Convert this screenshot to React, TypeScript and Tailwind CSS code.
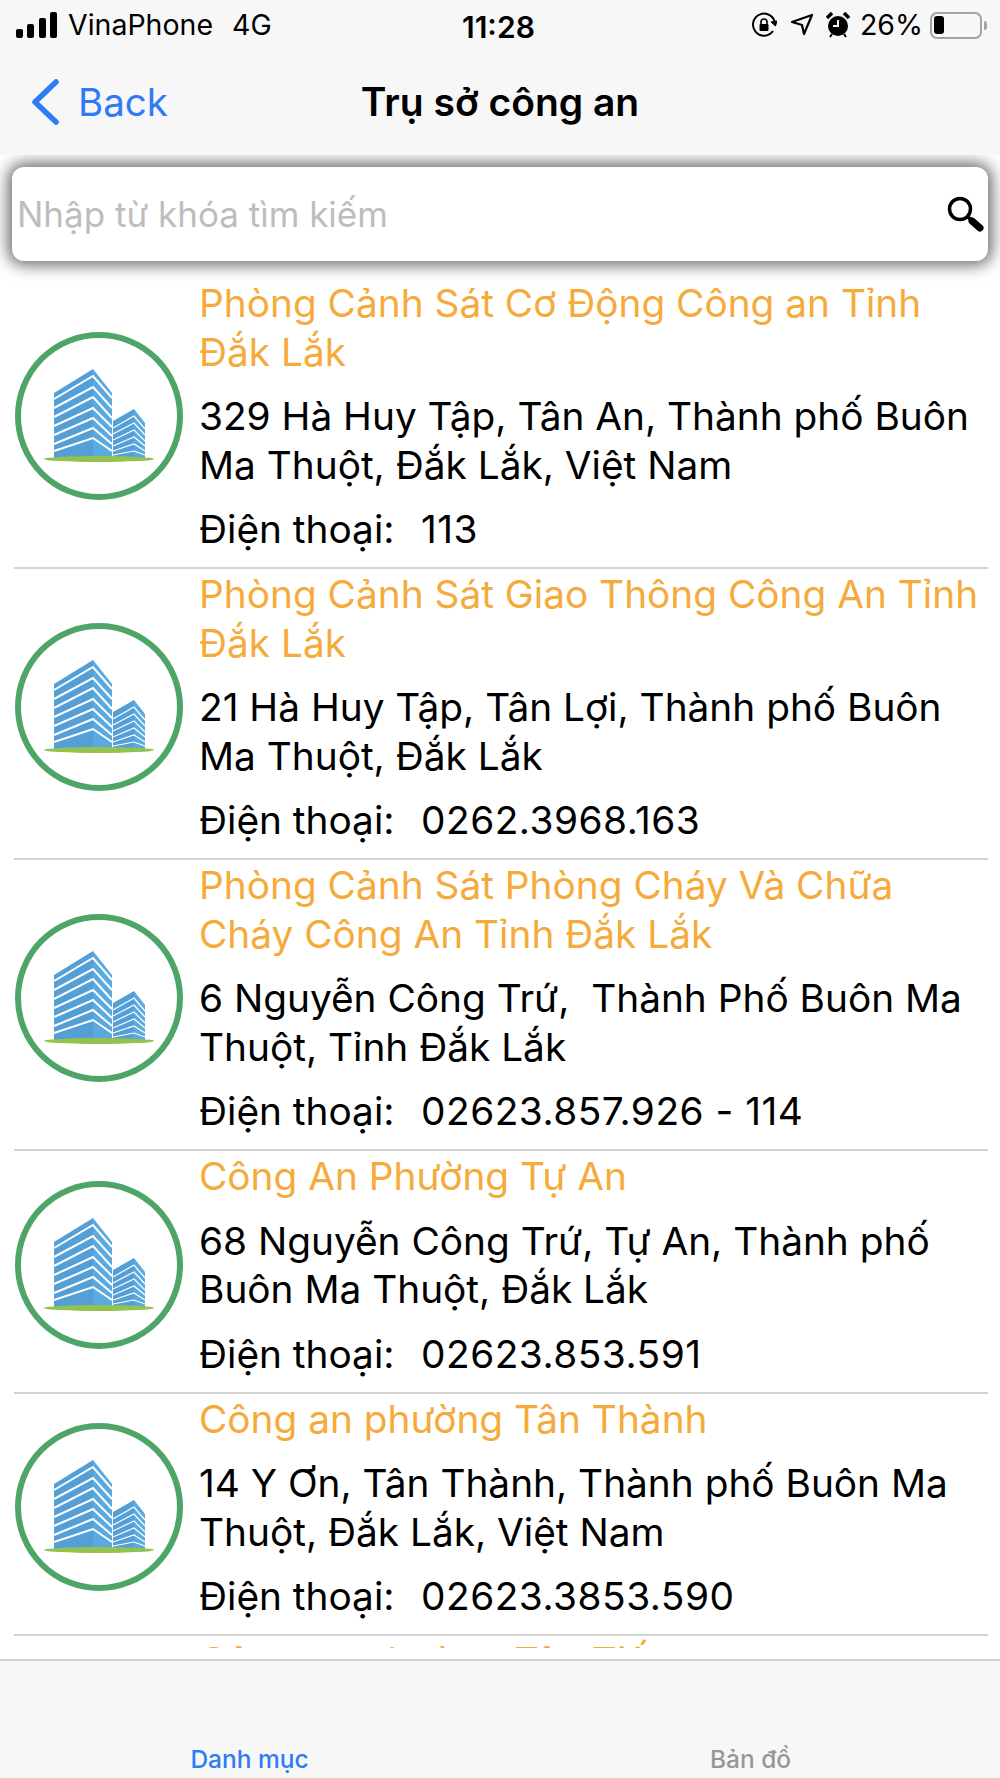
const FONT = "font-['Inter','Liberation_Sans',sans-serif]";

const places = [
  {
    name: ['Phòng Cảnh Sát Cơ Động Công an Tỉnh', 'Đắk Lắk'],
    address: ['329 Hà Huy Tập, Tân An, Thành phố Buôn', 'Ma Thuột, Đắk Lắk, Việt Nam'],
    phone: '113',
  },
  {
    name: ['Phòng Cảnh Sát Giao Thông Công An Tỉnh', 'Đắk Lắk'],
    address: ['21 Hà Huy Tập, Tân Lợi, Thành phố Buôn', 'Ma Thuột, Đắk Lắk'],
    phone: '0262.3968.163',
  },
  {
    name: ['Phòng Cảnh Sát Phòng Cháy Và Chữa', 'Cháy Công An Tỉnh Đắk Lắk'],
    address: ['6 Nguyễn Công Trứ,  Thành Phố Buôn Ma', 'Thuột, Tỉnh Đắk Lắk'],
    phone: '02623.857.926 - 114',
  },
  {
    name: ['Công An Phường Tự An'],
    address: ['68 Nguyễn Công Trứ, Tự An, Thành phố', 'Buôn Ma Thuột, Đắk Lắk'],
    phone: '02623.853.591',
  },
  {
    name: ['Công an phường Tân Thành'],
    address: ['14 Y Ơn, Tân Thành, Thành phố Buôn Ma', 'Thuột, Đắk Lắk, Việt Nam'],
    phone: '02623.3853.590',
  },
];

function BuildingLogo() {
  return (
    <svg width="170" height="170" viewBox="0 0 170 170" className="shrink-0">
      <circle cx="85" cy="85" r="81" fill="#fff" stroke="#4fa567" strokeWidth="6" />
      <path d="M40 62 L79 38 L79 127 L40 127 Z" fill="#549fd6" />
      <path d="M79 38 L98 62 L98 127 L79 127 Z" fill="#5aa9e0" />
      <path d="M99 90 L120 78 L120 127 L99 127 Z" fill="#549fd6" />
      <path d="M120 78 L131 92 L131 127 L120 127 Z" fill="#5aa9e0" />
      <g stroke="#fff" strokeWidth="2" fill="none">
        <path d="M40 68 L79 45 L98 67" />
        <path d="M40 77 L79 56 L98 77" />
        <path d="M40 86 L79 66 L98 87" />
        <path d="M40 95 L79 77 L98 96" />
        <path d="M40 104 L79 87 L98 105" />
        <path d="M40 113 L79 97 L98 113" />
        <path d="M40 120 L79 107 L98 120" />
      </g>
      <g stroke="#fff" strokeWidth="1.2" fill="none">
        <path d="M99 97 L120 85 L131 98" />
        <path d="M99 103 L120 92 L131 104" />
        <path d="M99 109 L120 99 L131 110" />
        <path d="M99 115 L120 106 L131 115" />
        <path d="M99 120 L120 113 L131 120" />
        <path d="M99 124 L120 120 L131 124" />
      </g>
      <ellipse cx="85" cy="128" rx="55" ry="3" fill="#93c24f" />
    </svg>
  );
}

function StatusBar() {
  return (
    <div className="relative flex h-[50px] items-center justify-between pl-4 pr-[13px] text-[28.5px] text-black">
      <div className="flex items-center">
        <svg width="42" height="26" viewBox="0 0 42 26" fill="#000">
          <rect x="0" y="17" width="7" height="9" rx="2" />
          <rect x="11" y="12" width="7" height="14" rx="2" />
          <rect x="23" y="6" width="7" height="20" rx="2" />
          <rect x="34" y="0" width="7" height="26" rx="2" />
        </svg>
        <span className="ml-[10px]">VinaPhone</span>
        <span className="ml-[19px]">4G</span>
      </div>
      <span className="absolute left-[462px] top-[5px] text-[30px] font-semibold">11:28</span>
      <div className="flex items-center">
        <svg width="26" height="26" viewBox="0 0 26 26" fill="none" stroke="#000" strokeWidth="2">
          <path d="M22 19 A11 11 0 1 1 24 12" />
          <path d="M20 10 L24.5 14 L26 9 Z" fill="#000" strokeWidth="1" />
          <rect x="8.5" y="12" width="9" height="7" rx="1" fill="#000" stroke="none" />
          <path d="M10 12 V10 A3 3 0 0 1 16 10 V12" strokeWidth="1.6" />
        </svg>
        <svg width="24" height="24" viewBox="0 0 24 24" fill="none" stroke="#000" strokeWidth="2.2" strokeLinejoin="round" className="ml-[13px]">
          <path d="M22 2 L14 21 L12 12 L2 9 Z" />
        </svg>
        <svg width="24" height="26" viewBox="0 0 24 26" className="ml-[12px]">
          <circle cx="12" cy="14" r="10" fill="#000" />
          <path d="M12 8 V14 H7" stroke="#f7f7f7" strokeWidth="2" fill="none" />
          <path d="M1 6 L6 1 M18 1 L23 6" stroke="#000" strokeWidth="3.5" />
          <path d="M4 25 L6 22 M20 25 L18 22" stroke="#000" strokeWidth="2" />
        </svg>
        <span className="ml-[10px]">26%</span>
        <div className="ml-[7px] flex items-center">
          <div className="flex h-[27px] w-[52px] items-center rounded-[7px] border-2 border-[#a3a3a3] p-[2px]">
            <div className="h-[18px] w-[10px] rounded-[3px] bg-black" />
          </div>
          <div className="ml-[2px] h-[9px] w-[3px] rounded-r-full bg-[#a3a3a3]" />
        </div>
      </div>
    </div>
  );
}

function NavBar() {
  return (
    <div className="relative flex h-[105px] items-start pl-[31px] pt-[29px]">
      <svg width="28" height="46" viewBox="0 0 28 46" fill="none" stroke="#2f7bf6" strokeWidth="5.5" strokeLinecap="round" strokeLinejoin="round">
        <path d="M25 3 L4 23 L25 43" />
      </svg>
      <span className="ml-[19px] text-[38.5px] leading-[46px] text-[#2f7bf6]">Back</span>
      <span className="absolute left-0 right-0 top-[29px] text-center text-[39px] font-semibold leading-[46px] text-black">
        Trụ sở công an
      </span>
    </div>
  );
}

function SearchBar() {
  return (
    <div className="relative z-10 bg-white px-3 pb-[17px] pt-3">
      <div className="flex h-[94px] items-center justify-between rounded-xl bg-white pl-[5px] pr-[4px] shadow-[0_0_16px_4px_rgba(0,0,0,0.6)]">
        <span className="text-[35px] text-[#bdbdbd]">Nhập từ khóa tìm kiếm</span>
        <svg width="38" height="38" viewBox="0 0 38 38" fill="none" stroke="#000">
          <circle cx="14" cy="14" r="10.5" strokeWidth="3.5" />
          <path d="M22 22 L25 25" strokeWidth="3.5" />
          <path d="M26 26 L34 33" strokeWidth="7" strokeLinecap="round" />
        </svg>
      </div>
    </div>
  );
}

function PlaceRow({ place }: { place: (typeof places)[number] }) {
  return (
    <div className="ml-[14px] mr-[12px] flex items-center border-b-2 border-[#d2d2d2] pb-[13.5px]">
      <BuildingLogo />
      <div className="ml-[15px] pt-px text-[38.8px] leading-[48.5px]">
        <div className="text-[#f5ab3c]">
          {place.name.map((line) => (
            <div key={line}>{line}</div>
          ))}
        </div>
        <div className="mt-[16px] text-black">
          {place.address.map((line) => (
            <div key={line} className="whitespace-pre">
              {line}
            </div>
          ))}
        </div>
        <div className="mt-[16px] flex text-black">
          <span className="w-[222px]">Điện thoại:</span>
          <span className="tracking-[0.5px]">{place.phone}</span>
        </div>
      </div>
    </div>
  );
}

export default function App() {
  return (
    <div className={`flex h-[1778px] w-[1000px] flex-col overflow-hidden bg-white ${FONT}`}>
      <div className="relative z-20 bg-[#f7f7f7]">
        <StatusBar />
        <NavBar />
      </div>
      <SearchBar />
      <div className="min-h-0 flex-1 overflow-hidden">
        {places.map((place) => (
          <PlaceRow key={place.phone} place={place} />
        ))}
        <div className="ml-[199px] pt-px text-[38.8px] leading-[48.5px] text-[#f5ab3c]">Công an phường Tân Tiến</div>
      </div>
      <div className="h-[11px] shrink-0 bg-white" />
      <div className="flex h-[119px] shrink-0 items-end border-t-2 border-[#d2d2d2] bg-[#f7f7f7] text-[24.5px] font-medium">
        <div className="flex-1 pr-[2px] text-center text-[#2f7bf6]">Danh mục</div>
        <div className="flex-1 text-center text-[#979797]">Bản đồ</div>
      </div>
    </div>
  );
}
